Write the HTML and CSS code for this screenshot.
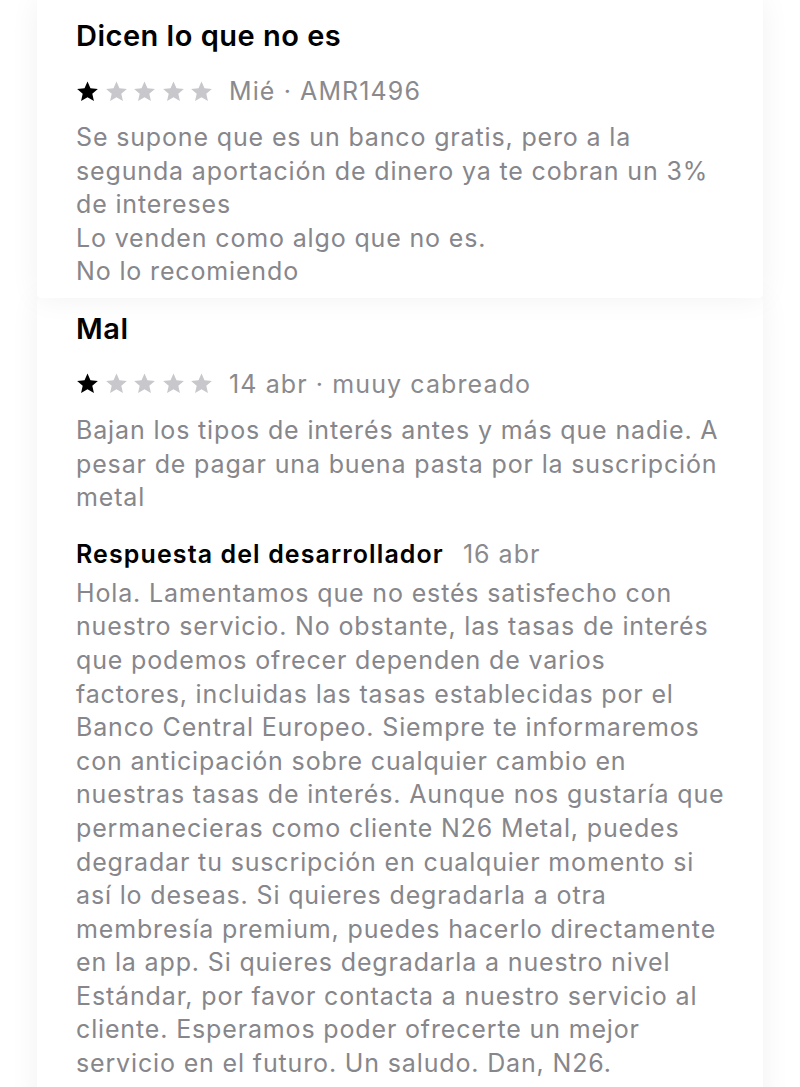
FILE: index.html
```html
<!DOCTYPE html>
<html lang="es">
<head>
<meta charset="utf-8">
<link rel="stylesheet" href="styles.css">
</head>
<body>
<main class="list">
  <section class="card card-first">
    <h2 class="title">Dicen lo que no es</h2>
    <div class="meta">
      <span class="stars">
        <svg class="star on" viewBox="0 0 24 24"><path d="M12 1.5l3.1 7.1 7.7.7-5.8 5.1 1.7 7.6L12 18l-6.7 4 1.7-7.6L1.2 9.3l7.7-.7z"/></svg>
        <svg class="star" viewBox="0 0 24 24"><path d="M12 1.5l3.1 7.1 7.7.7-5.8 5.1 1.7 7.6L12 18l-6.7 4 1.7-7.6L1.2 9.3l7.7-.7z"/></svg>
        <svg class="star" viewBox="0 0 24 24"><path d="M12 1.5l3.1 7.1 7.7.7-5.8 5.1 1.7 7.6L12 18l-6.7 4 1.7-7.6L1.2 9.3l7.7-.7z"/></svg>
        <svg class="star" viewBox="0 0 24 24"><path d="M12 1.5l3.1 7.1 7.7.7-5.8 5.1 1.7 7.6L12 18l-6.7 4 1.7-7.6L1.2 9.3l7.7-.7z"/></svg>
        <svg class="star" viewBox="0 0 24 24"><path d="M12 1.5l3.1 7.1 7.7.7-5.8 5.1 1.7 7.6L12 18l-6.7 4 1.7-7.6L1.2 9.3l7.7-.7z"/></svg>
      </span>
      <span class="meta-text">Mié · AMR1496</span>
    </div>
    <p class="body">Se supone que es un banco gratis, pero a la<br>segunda aportación de dinero ya te cobran un 3%<br>de intereses<br>Lo venden como algo que no es.<br>No lo recomiendo</p>
  </section>

  <section class="card card-second">
    <h2 class="title">Mal</h2>
    <div class="meta">
      <span class="stars">
        <svg class="star on" viewBox="0 0 24 24"><path d="M12 1.5l3.1 7.1 7.7.7-5.8 5.1 1.7 7.6L12 18l-6.7 4 1.7-7.6L1.2 9.3l7.7-.7z"/></svg>
        <svg class="star" viewBox="0 0 24 24"><path d="M12 1.5l3.1 7.1 7.7.7-5.8 5.1 1.7 7.6L12 18l-6.7 4 1.7-7.6L1.2 9.3l7.7-.7z"/></svg>
        <svg class="star" viewBox="0 0 24 24"><path d="M12 1.5l3.1 7.1 7.7.7-5.8 5.1 1.7 7.6L12 18l-6.7 4 1.7-7.6L1.2 9.3l7.7-.7z"/></svg>
        <svg class="star" viewBox="0 0 24 24"><path d="M12 1.5l3.1 7.1 7.7.7-5.8 5.1 1.7 7.6L12 18l-6.7 4 1.7-7.6L1.2 9.3l7.7-.7z"/></svg>
        <svg class="star" viewBox="0 0 24 24"><path d="M12 1.5l3.1 7.1 7.7.7-5.8 5.1 1.7 7.6L12 18l-6.7 4 1.7-7.6L1.2 9.3l7.7-.7z"/></svg>
      </span>
      <span class="meta-text">14 abr · muuy cabreado</span>
    </div>
    <p class="body">Bajan los tipos de interés antes y más que nadie. A<br>pesar de pagar una buena pasta por la suscripción<br>metal</p>

    <div class="reply-head">
      <span class="reply-title">Respuesta del desarrollador</span>
      <span class="reply-date">16 abr</span>
    </div>
    <p class="body reply-body">Hola. Lamentamos que no estés satisfecho con<br>nuestro servicio. No obstante, las tasas de interés<br>que podemos ofrecer dependen de varios<br>factores, incluidas las tasas establecidas por el<br>Banco Central Europeo. Siempre te informaremos<br>con anticipación sobre cualquier cambio en<br>nuestras tasas de interés. Aunque nos gustaría que<br>permanecieras como cliente N26 Metal, puedes<br>degradar tu suscripción en cualquier momento si<br>así lo deseas. Si quieres degradarla a otra<br>membresía premium, puedes hacerlo directamente<br>en la app. Si quieres degradarla a nuestro nivel<br>Estándar, por favor contacta a nuestro servicio al<br>cliente. Esperamos poder ofrecerte un mejor<br>servicio en el futuro. Un saludo. Dan, N26.</p>
  </section>
</main>
</body>
</html>
```

FILE: styles.css
```css
html, body {
  margin: 0;
  padding: 0;
  background: #ffffff;
}

body {
  font-family: Inter, "Liberation Sans", Arial, sans-serif;
  -webkit-font-smoothing: antialiased;
  overflow: hidden;
}

.list {
  display: flex;
  flex-direction: column;
  padding: 0 37px;
}

.card {
  background: #ffffff;
  box-shadow: 0 0 30px rgba(0, 0, 0, 0.06);
  padding: 0 10px 0 39px;
}

.card-first {
  padding-top: 19px;
  padding-bottom: 9px;
  border-radius: 0 0 4px 4px;
  position: relative;
  z-index: 1;
}

.card-second {
  padding-top: 14px;
  padding-bottom: 40px;
  border-radius: 4px 4px 0 0;
}

.title {
  margin: 0;
  font-size: 29px;
  line-height: 34px;
  font-weight: 600;
  color: #000000;
  letter-spacing: 0.5px;
}

.meta {
  display: flex;
  align-items: center;
  gap: 16px;
  margin-top: 21px;
  height: 34px;
}

.stars {
  display: flex;
  gap: 5.5px;
}

.star {
  width: 23px;
  height: 23px;
  fill: #c7c7cc;
}

.star.on {
  fill: #000000;
}

.meta-text {
  font-size: 25px;
  color: #8a8a8e;
  letter-spacing: 1.1px;
}

.body {
  margin: 13px 0 0;
  font-size: 25px;
  line-height: 33.6px;
  color: #86868b;
  letter-spacing: 0.85px;
  white-space: nowrap;
}

.card-second .body {
  margin-top: 13px;
}

.reply-head {
  display: flex;
  align-items: baseline;
  gap: 19px;
  margin-top: 22px;
  line-height: 34px;
}

.reply-title {
  font-size: 25px;
  font-weight: 600;
  color: #000000;
  letter-spacing: 1.1px;
}

.reply-date {
  font-size: 25px;
  color: #8a8a8e;
  letter-spacing: 1px;
}

.card-second .reply-body {
  margin-top: 6px;
}
```
